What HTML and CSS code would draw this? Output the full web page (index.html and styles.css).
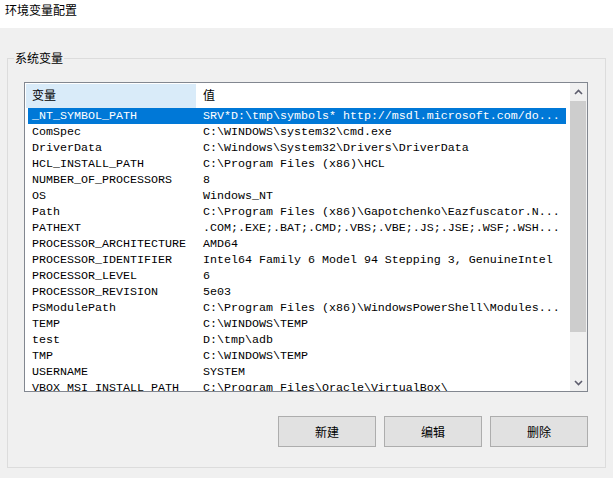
FILE: index.html
```html
<!DOCTYPE html>
<html>
<head>
<meta charset="utf-8">
<link rel="stylesheet" href="styles.css">
</head>
<body>
<div class="titlebar">环境变量配置</div>
<div class="content">
  <div class="group">
    <div class="legend">系统变量</div>
    <div class="list">
      <div class="list-main">
        <div class="header">
          <div class="hcell hname">变量</div>
          <div class="hcell hval">值</div>
        </div>
        <div class="rows">
          <div class="row selected"><span class="c1">_NT_SYMBOL_PATH</span><span class="c2">SRV*D:\tmp\symbols* http://msdl.microsoft.com/do...</span></div>
          <div class="row"><span class="c1">ComSpec</span><span class="c2">C:\WINDOWS\system32\cmd.exe</span></div>
          <div class="row"><span class="c1">DriverData</span><span class="c2">C:\Windows\System32\Drivers\DriverData</span></div>
          <div class="row"><span class="c1">HCL_INSTALL_PATH</span><span class="c2">C:\Program Files (x86)\HCL</span></div>
          <div class="row"><span class="c1">NUMBER_OF_PROCESSORS</span><span class="c2">8</span></div>
          <div class="row"><span class="c1">OS</span><span class="c2">Windows_NT</span></div>
          <div class="row"><span class="c1">Path</span><span class="c2">C:\Program Files (x86)\Gapotchenko\Eazfuscator.N...</span></div>
          <div class="row"><span class="c1">PATHEXT</span><span class="c2">.COM;.EXE;.BAT;.CMD;.VBS;.VBE;.JS;.JSE;.WSF;.WSH...</span></div>
          <div class="row"><span class="c1">PROCESSOR_ARCHITECTURE</span><span class="c2">AMD64</span></div>
          <div class="row"><span class="c1">PROCESSOR_IDENTIFIER</span><span class="c2">Intel64 Family 6 Model 94 Stepping 3, GenuineIntel</span></div>
          <div class="row"><span class="c1">PROCESSOR_LEVEL</span><span class="c2">6</span></div>
          <div class="row"><span class="c1">PROCESSOR_REVISION</span><span class="c2">5e03</span></div>
          <div class="row"><span class="c1">PSModulePath</span><span class="c2">C:\Program Files (x86)\WindowsPowerShell\Modules...</span></div>
          <div class="row"><span class="c1">TEMP</span><span class="c2">C:\WINDOWS\TEMP</span></div>
          <div class="row"><span class="c1">test</span><span class="c2">D:\tmp\adb</span></div>
          <div class="row"><span class="c1">TMP</span><span class="c2">C:\WINDOWS\TEMP</span></div>
          <div class="row"><span class="c1">USERNAME</span><span class="c2">SYSTEM</span></div>
          <div class="row"><span class="c1">VBOX_MSI_INSTALL_PATH</span><span class="c2">C:\Program Files\Oracle\VirtualBox\</span></div>
        </div>
      </div>
      <div class="scrollbar">
        <div class="sb-btn"><svg width="9" height="6" viewBox="0 0 9 6"><path d="M1 5 L4.5 1.5 L8 5" fill="none" stroke="#5d5d6d" stroke-width="1.6"/></svg></div>
        <div class="sb-track"><div class="sb-thumb"></div></div>
        <div class="sb-btn"><svg width="9" height="6" viewBox="0 0 9 6"><path d="M1 1 L4.5 4.5 L8 1" fill="none" stroke="#5d5d6d" stroke-width="1.6"/></svg></div>
      </div>
    </div>
    <div class="buttons">
      <div class="btn">新建</div>
      <div class="btn">编辑</div>
      <div class="btn">删除</div>
    </div>
  </div>
</div>
</body>
</html>
```
FILE: styles.css
```css
html, body {
  margin: 0;
  padding: 0;
}
body {
  width: 613px;
  height: 478px;
  background: #f0f0f0;
  font-family: "Noto Sans CJK SC", "Noto Sans", sans-serif;
  font-size: 12px;
  color: #000;
  overflow: hidden;
}
.titlebar {
  height: 28px;
  box-sizing: border-box;
  background: #fff;
  padding: 3px 0 0 5px;
  line-height: 14px;
  font-size: 12px;
}
.content {
  padding: 30px 0 0 7px;
}
.group {
  position: relative;
  width: 599px;
  height: 410px;
  box-sizing: border-box;
  border: 1px solid #dcdcdc;
  padding: 23px 17px 0 16px;
  display: flex;
  flex-direction: column;
}
.legend {
  position: absolute;
  top: -9px;
  left: 6px;
  padding: 0 1px;
  background: #f0f0f0;
  line-height: 16px;
  font-size: 12px;
}
.list {
  height: 310px;
  box-sizing: border-box;
  border: 1px solid #828790;
  background: #fff;
  display: flex;
}
.list-main {
  flex: 1;
  display: flex;
  flex-direction: column;
  overflow: hidden;
}
.header {
  display: flex;
  height: 25px;
  padding-top: 1px;
  box-sizing: border-box;
  flex-shrink: 0;
}
.hcell {
  line-height: 22px;
  font-size: 12px;
}
.hname {
  margin-left: 1px;
  width: 170px;
  box-sizing: border-box;
  padding-left: 6px;
  background: #d9ebf9;
}
.hval {
  padding-left: 7px;
}
.rows {
  flex: 1;
  overflow: hidden;
}
.row {
  display: flex;
  height: 16px;
  margin-left: 3px;
  width: 538px;
  font-family: "Liberation Mono", "DejaVu Sans Mono", monospace;
  font-size: 11.67px;
  line-height: 16px;
  white-space: nowrap;
}
.row.selected {
  background: #0078d7;
  color: #fff;
}
.c1 {
  width: 175px;
  flex-shrink: 0;
  box-sizing: border-box;
  padding-left: 4px;
}
.c2 {
  flex: 1;
}
.scrollbar {
  width: 17px;
  background: #f0f0f0;
  display: flex;
  flex-direction: column;
}
.sb-btn {
  height: 17px;
  display: flex;
  align-items: center;
  justify-content: center;
  flex-shrink: 0;
}
.sb-track {
  flex: 1;
  padding-top: 1px;
}
.sb-thumb {
  margin: 0 1px 0 0;
  height: 231px;
  background: #cdcdcd;
}
.buttons {
  display: flex;
  justify-content: flex-end;
  gap: 8px;
  margin-top: 24px;
}
.btn {
  width: 98px;
  height: 31px;
  box-sizing: border-box;
  border: 1px solid #adadad;
  background: #e1e1e1;
  display: flex;
  align-items: center;
  justify-content: center;
  font-size: 12px;
}
```
